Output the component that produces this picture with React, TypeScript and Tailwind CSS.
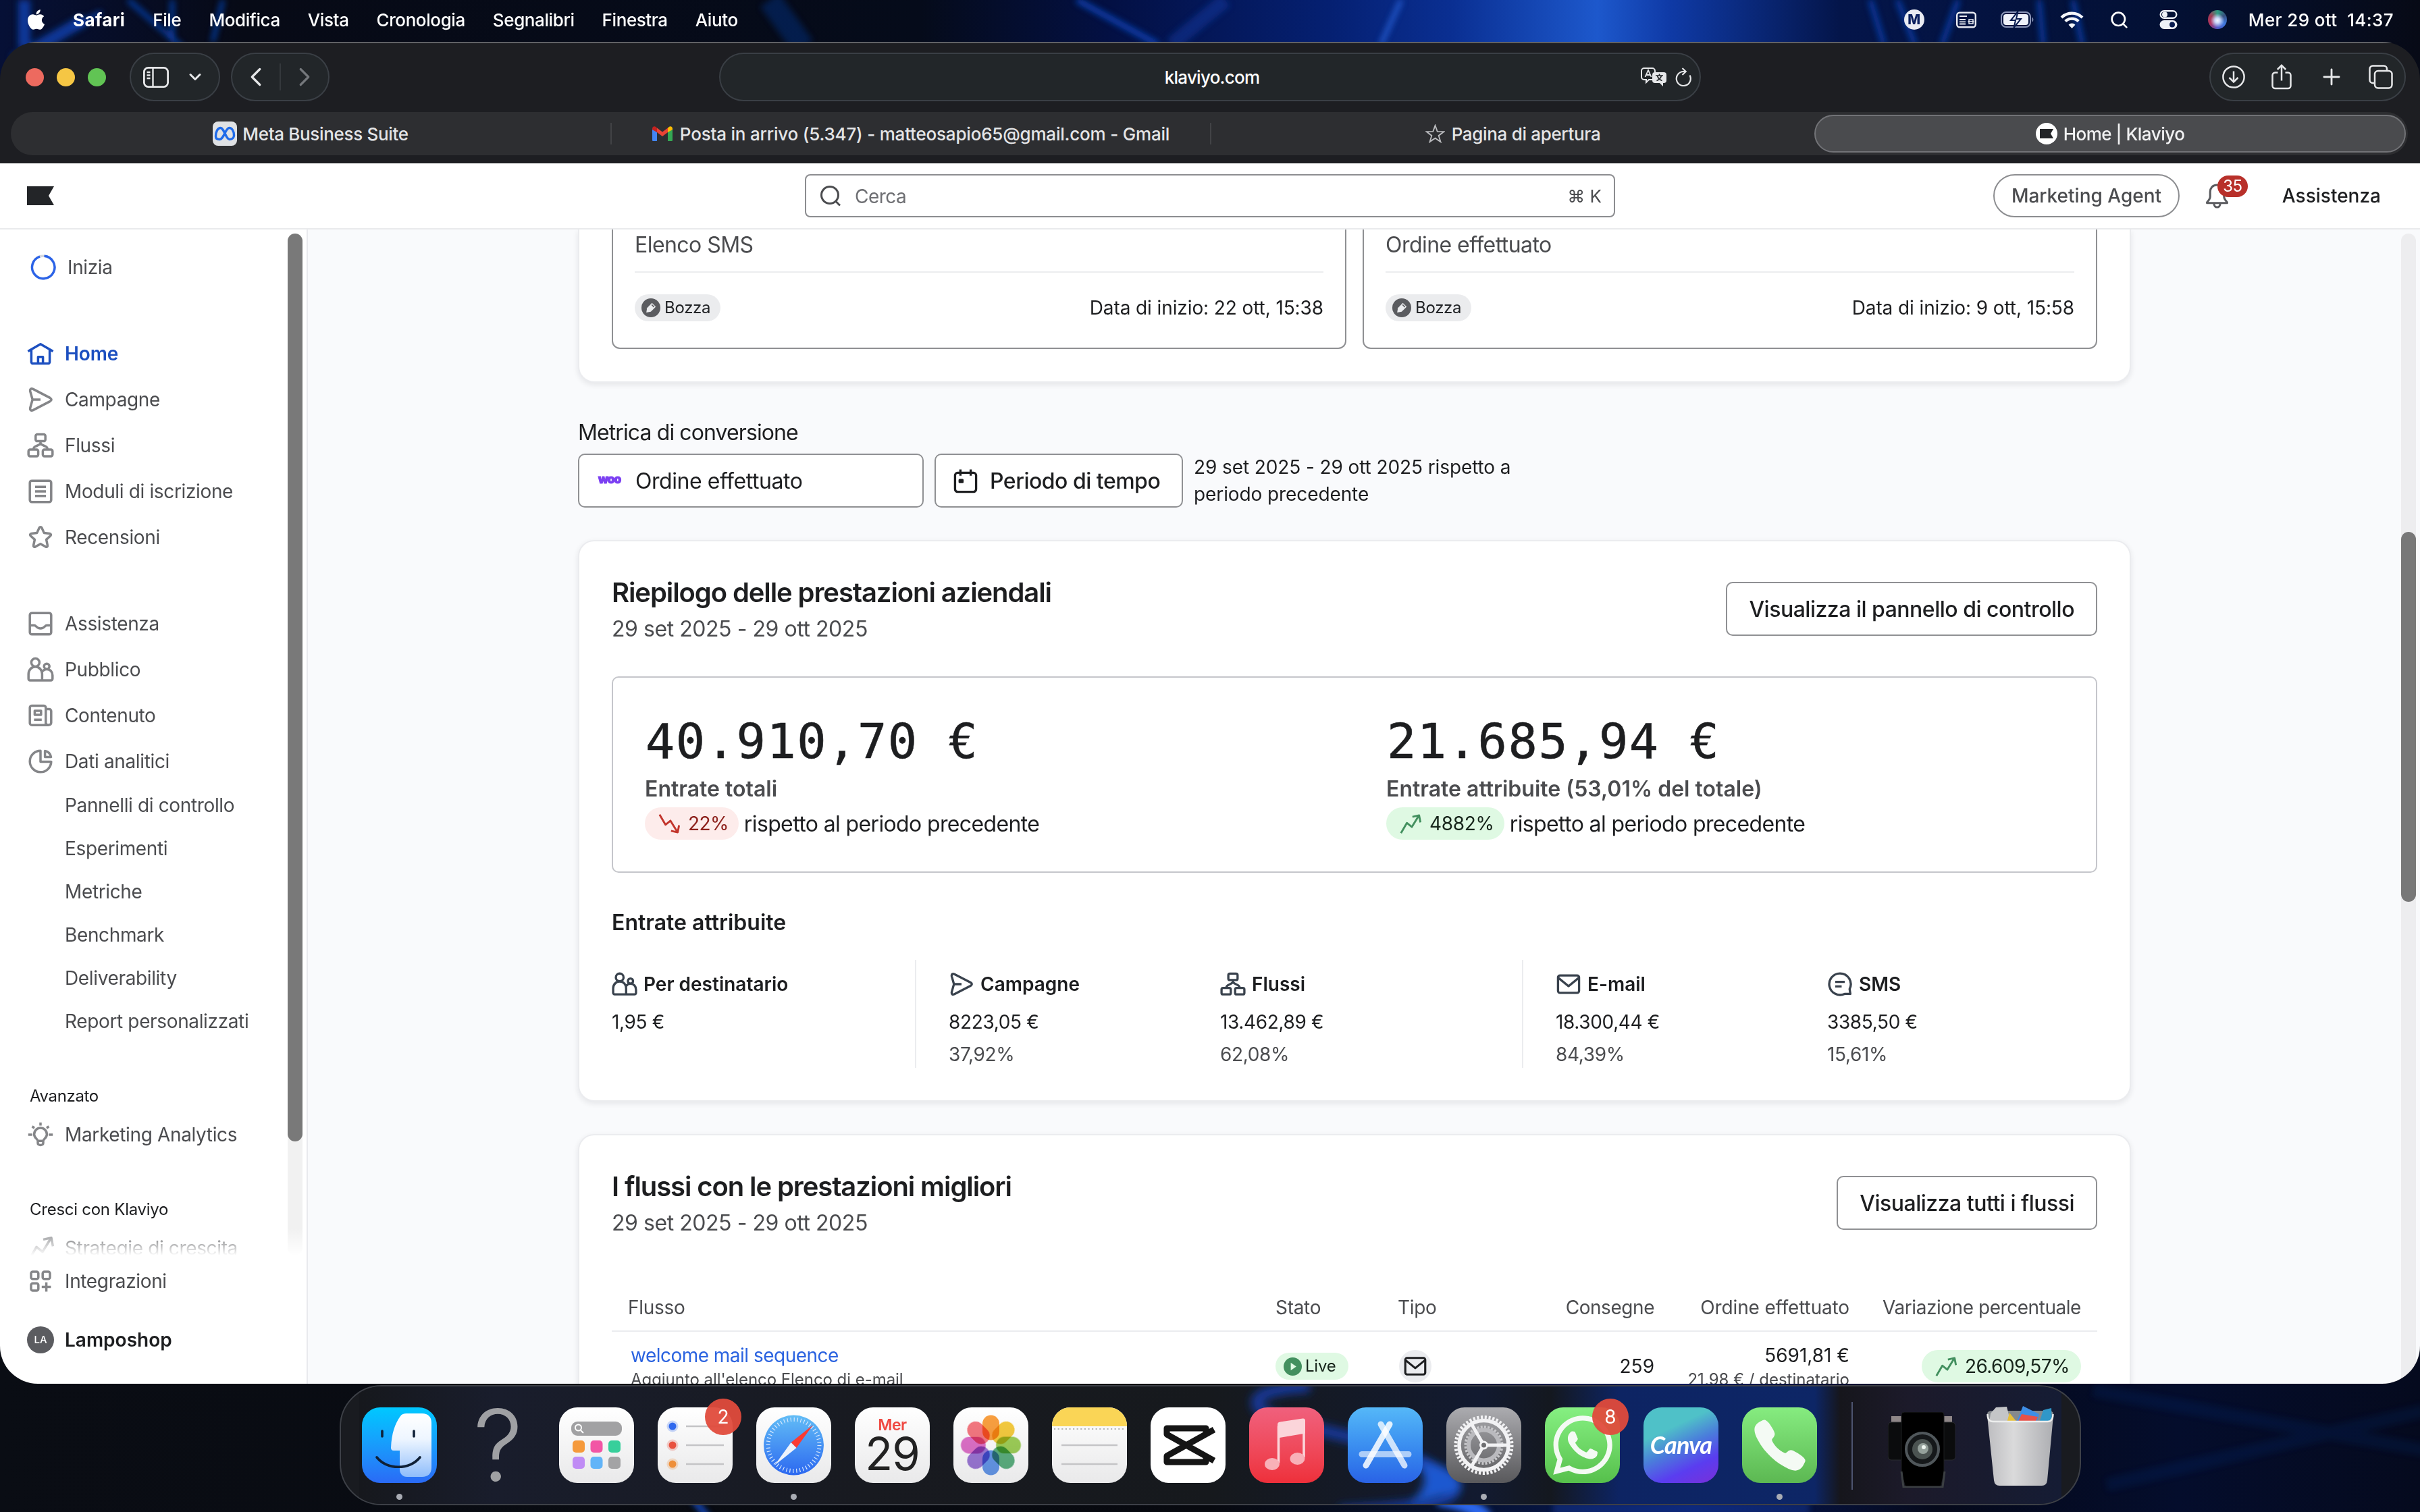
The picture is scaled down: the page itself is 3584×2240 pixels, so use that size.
import React from 'react';
import { ChevronDown, ChevronLeft, ChevronRight, Plus, Search } from 'lucide-react';
import { FaApple, FaWhatsapp } from 'react-icons/fa';
import { IoCall } from 'react-icons/io5';

type IconProps = { className?: string };

/* ---------- Klaviyo icons, 20px grid ---------- */

function Icon({ className = 'h-10 w-10', children }: { className?: string; children: React.ReactNode }) {
    return (
        <svg
            viewBox="0 0 20 20"
            fill="none"
            stroke="currentColor"
            strokeWidth="1.75"
            strokeLinejoin="round"
            className={`shrink-0 ${className}`}
        >
            {children}
        </svg>
    );
}

const HomeIcon = (p: IconProps) => (
    <Icon {...p}>
        <path d="M.7 8.2 10 2.9l9.3 5.3M3.2 7.2v8.9a1.2 1.2 0 0 0 1.2 1.2h11.2a1.2 1.2 0 0 0 1.2-1.2V7.2M8.2 17v-4.6h3.6V17" />
    </Icon>
);

const SendIcon = (p: IconProps) => (
    <Icon {...p}>
        <path d="M2.4 4C2 2.2 3 1.5 4.5 2.2L17 8.7c1.4.8 1.4 1.8 0 2.6L4.5 17.8C3 18.5 2 17.8 2.4 16l1.7-6zM4.1 10H10" />
    </Icon>
);

const FlowIcon = (p: IconProps) => (
    <Icon {...p}>
        <rect x="6.4" y="1.8" width="7.2" height="5" rx="1.2" />
        <rect x="1.1" y="13" width="7.2" height="5" rx="1.2" />
        <rect x="11.7" y="13" width="7.2" height="5" rx="1.2" />
        <path d="M4.8 13c0-3.4 3.6-2 5.2-4.6 1.6 2.6 5.2 1.2 5.2 4.6M10 6.8v1.8" />
    </Icon>
);

const FormIcon = (p: IconProps) => (
    <Icon {...p}>
        <rect x="2.1" y="2.1" width="15.8" height="15.8" rx="1.5" />
        <path d="M6 6.6h8M6 10h8M6 13.4h8" />
    </Icon>
);

const StarIcon = (p: IconProps) => (
    <Icon {...p}>
        <path d="M9.1 2.9a1 1 0 0 1 1.8 0l1.7 3.8 4.2.5c.9.1 1.2 1.1.6 1.7l-3.1 2.8.9 4.3c.2.9-.7 1.4-1.4 1L10 14.9 6.2 17c-.7.4-1.6-.1-1.4-1l.9-4.3-3.1-2.8c-.6-.6-.3-1.6.6-1.7l4.2-.5z" />
    </Icon>
);

const InboxIcon = (p: IconProps) => (
    <Icon {...p}>
        <rect x="2.1" y="2.1" width="15.8" height="15.8" rx="1.5" />
        <path d="M2.1 11.2h3.3c1.6 0 1.4 2.3 4.6 2.3s3-2.3 4.6-2.3h3.3" />
    </Icon>
);

const PeopleIcon = (p: IconProps) => (
    <Icon {...p}>
        <circle cx="6.2" cy="4.7" r="3" />
        <circle cx="14.6" cy="7.6" r="2" />
        <path d="M1.1 16.7v-3.4c0-3 2.2-5.4 5.1-5.4s5 2.4 5 5.4V18H2.3a1.2 1.2 0 0 1-1.2-1.3zM11.2 18h6.5a1.2 1.2 0 0 0 1.2-1.2v-2.5c0-2.6-1.8-4.6-4.2-4.6-1.6 0-3 .9-3.7 2.3" />
    </Icon>
);

const ContentIcon = (p: IconProps) => (
    <Icon {...p}>
        <path d="M16.2 17.1H3.6a1.5 1.5 0 0 1-1.5-1.5V4.2a1.5 1.5 0 0 1 1.5-1.5h8.8a1.5 1.5 0 0 1 1.5 1.5v12.9M13.9 5.3h2.5a1.5 1.5 0 0 1 1.5 1.5v8.6c0 2.2-4 2.2-4 0" />
        <path d="M5.7 6.5h4.7v3H5.7zM5.2 13.1h5.7" />
    </Icon>
);

const PieIcon = (p: IconProps) => (
    <Icon {...p}>
        <path d="M10 2.1a7.9 7.9 0 1 0 7.9 8.1H10z" />
        <path d="M13.3 2.3c2.4.4 4 2.1 4.5 4.5h-4.5z" />
    </Icon>
);

const BulbIcon = (p: IconProps) => (
    <Icon {...p}>
        <path d="M8 14.6c0-1.3-2.7-2.2-2.7-4.9a4.7 4.7 0 0 1 9.4 0c0 2.7-2.7 3.6-2.7 4.9zM8 14.6v1.6c0 2 4 2 4 0v-1.6M10 1v2.3M.9 10h3M16.1 10h3M3.8 3.9l1.7 1.2M16.2 3.9l-1.7 1.2" />
    </Icon>
);

const TrendUp = (p: IconProps) => (
    <Icon {...p}>
        <path d="M1.7 18.3 7 9.2l4.5 3.6 6-9.8M12 3.7l6-1.3 1.2 6.3" />
    </Icon>
);

const TrendDown = (p: IconProps) => (
    <Icon {...p}>
        <path d="M1.7 1.7 7 10.8l4.5-3.6 6 9.8M12 16.3l6 1.3 1.2-6.3" />
    </Icon>
);

const AppsIcon = (p: IconProps) => (
    <Icon {...p}>
        <rect x="3" y="3" width="5.4" height="5.4" rx="1.3" />
        <rect x="11.6" y="3" width="5.4" height="5.4" rx="1.3" />
        <rect x="3" y="11.6" width="5.4" height="5.4" rx="1.3" />
        <path d="M14.3 10.9v6.8M10.9 14.3h6.8" />
    </Icon>
);

const MailIcon = (p: IconProps) => (
    <Icon {...p}>
        <rect x="1.8" y="3.2" width="16.4" height="13.6" rx="1.5" />
        <path d="m2.2 5.2 7.800 6.400 7.800-6.400" />
    </Icon>
);

const SmsIcon = (p: IconProps) => (
    <Icon {...p}>
        <path d="M10 1.600a8.400 8.400 0 1 0 3.600 16c1.600 0 3-.1 4.500 0l-.6-3.800A8.400 8.400 0 0 0 10 1.600zM6.300 8.200h7.400M6.300 11.800h5" />
    </Icon>
);

const CalendarIcon = (p: IconProps) => (
    <Icon {...p}>
        <rect x="1.8" y="3.4" width="16.4" height="14.8" rx="2" />
        <path d="M6 .8v4.8M14 .8v4.8M5.4 9h2.2v1.6H5.4z" />
    </Icon>
);

const DraftIcon = ({ className }: IconProps) => (
    <svg viewBox="0 0 28 28" className={className}>
        <circle cx="14" cy="14" r="14" fill="#5b5c60" />
        <path d="m15.6 6.8 5.6 5.6-7.3 7.4-6.7 1.1 1.1-6.7z" fill="#ecedef" />
        <path d="m15.2 9.4 3.5 3.5" stroke="#5b5c60" strokeWidth="1.6" />
    </svg>
);

const Flag = ({ className }: IconProps) => (
    <svg viewBox="0 0 40 28" className={className} preserveAspectRatio="none">
        <path d="M0 0h40l-8 14 8 14H0z" fill="#232528" />
    </svg>
);

/* ---------- desktop ---------- */

function Wallpaper() {
    return (
        <svg viewBox="0 0 3584 2240" className="absolute inset-0 h-full w-full">
            <defs>
                <linearGradient id="wpTop" x1="0" x2="1">
                    <stop offset="0" stopColor="#061036" />
                    <stop offset=".1" stopColor="#070a16" />
                    <stop offset=".38" stopColor="#050b1a" />
                    <stop offset=".46" stopColor="#031044" />
                    <stop offset=".55" stopColor="#052072" />
                    <stop offset=".6" stopColor="#0a2f92" />
                    <stop offset=".66" stopColor="#1d58cc" />
                    <stop offset=".69" stopColor="#0f3aa6" />
                    <stop offset=".76" stopColor="#04154a" />
                    <stop offset=".9" stopColor="#031033" />
                    <stop offset="1" stopColor="#070a16" />
                </linearGradient>
                <linearGradient id="wpBottom" x1="0" x2="1">
                    <stop offset="0" stopColor="#0a0d14" />
                    <stop offset=".5" stopColor="#07090f" />
                    <stop offset=".6" stopColor="#06112e" />
                    <stop offset=".7" stopColor="#06195a" />
                    <stop offset=".8" stopColor="#05091a" />
                    <stop offset=".9" stopColor="#040d2c" />
                    <stop offset="1" stopColor="#050a1e" />
                </linearGradient>
                <filter id="wpBlur" x="-20%" y="-20%" width="140%" height="140%">
                    <feGaussianBlur stdDeviation="5" />
                </filter>
            </defs>
            <rect width="3584" height="1200" fill="url(#wpTop)" />
            <rect y="1200" width="3584" height="1040" fill="url(#wpBottom)" />
            <g fill="none" stroke="#1049c4" filter="url(#wpBlur)">
                <path d="M36 0v70M124 30 20 90" strokeWidth="18" opacity=".7" />
                <path d="m190 0 80 70M255 0v62M330 0l-15 62M110 40l40-22" strokeWidth="5" />
                <path d="m1140 0 50 70" strokeWidth="34" opacity=".3" />
                <path d="m1595 0 120 66" strokeWidth="8" opacity=".9" />
                <path d="m1815 0-80 66" strokeWidth="22" opacity=".35" />
                <path d="m2075 0-30 66" strokeWidth="5" stroke="#2c6be6" />
                <path d="m2770 0 20 66M2810 0l26 66M2900 0l-24 66M3020 0l6 66M3070 0l14 66" strokeWidth="7" opacity=".8" />
            </g>
            <g fill="none" stroke="#1450d0" filter="url(#wpBlur)">
                <path d="m1010 2200 40 50" strokeWidth="8" />
                <path d="M2130 2220q60 10 70 30" strokeWidth="22" stroke="#2a66ec" />
                <path d="M2300 2235h380" strokeWidth="20" opacity=".3" />
                <path d="m3100 2060 500 90M3120 2200l470-110" strokeWidth="20" opacity=".1" />
            </g>
        </svg>
    );
}

function MenuBar() {
    return (
        <div className="relative flex h-[58px] items-center pr-[39px] pl-[39px] text-[26px] font-medium tracking-[-0.4px] whitespace-pre text-white">
            <FaApple className="h-[34px] w-[29px]" />
            <span className="ml-[40px] font-bold tracking-[0.4px]">Safari</span>
            <div className="ml-[41px] flex gap-[41px]">
                <span>File</span>
                <span>Modifica</span>
                <span>Vista</span>
                <span>Cronologia</span>
                <span>Segnalibri</span>
                <span>Finestra</span>
                <span>Aiuto</span>
            </div>
            <div className="ml-auto flex items-center">
                <span className="flex h-[30px] w-[30px] items-center justify-center rounded-full bg-[#e9ebf2] text-[20px] font-extrabold tracking-normal text-[#0a1f5e]">
                    M
                </span>
                <svg viewBox="0 0 30 24" className="ml-[47px] h-[25px] w-[30px]" fill="none" stroke="#e9ebf2" strokeWidth="2.4">
                    <rect x="1.2" y="1.2" width="27.6" height="21.6" rx="4" />
                    <path d="M5 6.500h11M5 11.500h9M5 14.800h9M5 18h9" strokeWidth="1.8" />
                    <path d="M19 11.500h6v6h-6zM17.500 14.500h9" strokeWidth="1.5" />
                </svg>
                <svg viewBox="0 0 50 24" className="ml-[36px] h-6 w-[50px]">
                    <rect x="1" y="1" width="43" height="22" rx="7" fill="none" stroke="#8b95b8" strokeWidth="2" />
                    <rect x="4" y="4" width="37" height="16" rx="4" fill="#eef1fa" />
                    <path d="M46.5 8.500c2.500 1 2.500 6 0 7z" fill="#8b95b8" />
                    <path d="M25.500 0 15 13h7l-2.500 11L30 11h-7z" fill="#eef1fa" stroke="#0a1c50" strokeWidth="2" />
                </svg>
                <svg viewBox="0 0 34 25" className="ml-[38px] h-[25px] w-[35px]" fill="none" stroke="#f4f6fb" strokeWidth="4.2">
                    <path d="M1.500 9a22 22 0 0 1 31 0M7.200 14.600a14 14 0 0 1 19.600 0" />
                    <path d="m17 25-5-5.300a7 7 0 0 1 10 0z" fill="#f4f6fb" stroke="none" />
                </svg>
                <Search className="ml-[38px] h-[29px] w-[29px]" strokeWidth={2.2} />
                <svg viewBox="0 0 26 28" className="ml-[45px] h-[28px] w-[27px]">
                    <rect x="1.2" y="1.2" width="23.6" height="10.6" rx="5.3" fill="none" stroke="#eef0f6" strokeWidth="2.4" />
                    <circle cx="7.5" cy="6.5" r="4" fill="#eef0f6" />
                    <rect y="15" width="26" height="13" rx="6.5" fill="#eef0f6" />
                    <circle cx="18.5" cy="21.5" r="4" fill="#0a1c50" />
                </svg>
                <span className="ml-[45px] h-7 w-7 rounded-full bg-[radial-gradient(circle_at_50%_55%,#f4f6ff_0%,#c9d6f8_18%,transparent_50%),conic-gradient(#2f9f84,#37507f,#3f7ae0,#4f58c8,#b2355f,#a03a55,#2f9f84)]" />
                <span className="ml-[32px] tracking-[0.38px]">Mer 29 ott  14:37</span>
            </div>
        </div>
    );
}

function Toolbar() {
    return (
        <div className="flex h-[104px] shrink-0 items-center border-t-2 border-[#606165] pb-0.5 pl-[38px] text-[#e6e7e9]">
            <div className="flex gap-[19px]">
                <span className="h-[27px] w-[27px] rounded-full bg-[#ed6a5f]" />
                <span className="h-[27px] w-[27px] rounded-full bg-[#f5c644]" />
                <span className="h-[27px] w-[27px] rounded-full bg-[#61c454]" />
            </div>
            <div className="ml-[35px] flex h-[72px] w-[134px] items-center rounded-full border-2 border-[#3a3f45] bg-[#222629] pl-[18px]">
                <svg viewBox="0 0 38 31" className="h-[31px] w-[38px]" fill="none" stroke="currentColor" strokeWidth="2.8">
                    <rect x="1.4" y="1.4" width="35.2" height="28.2" rx="6" />
                    <path d="M14.5 1.400v28.200M5.500 8h5M5.500 12.500h5M5.500 17h5" strokeWidth="2.4" />
                </svg>
                <ChevronDown className="ml-[25px] h-7 w-7" strokeWidth={2.6} />
            </div>
            <div className="ml-4 flex h-[72px] w-[146px] items-center rounded-full border-2 border-[#3a3f45] bg-[#222629] pl-[12px]">
                <ChevronLeft className="h-[46px] w-[46px]" strokeWidth={1.7} />
                <span className="ml-[12px] h-10 w-0.5 bg-[#34383c]" />
                <ChevronRight className="ml-[12px] h-[46px] w-[46px] text-[#75787c]" strokeWidth={1.7} />
            </div>
            <div className="ml-[577px] flex h-[72px] w-[1454px] items-center rounded-full border-2 border-[#3a3f45] bg-[#222629] pr-3">
                <span className="flex-1" />
                <span className="ml-[18px] text-[26px] font-medium tracking-[-0.75px] text-white">klaviyo.com</span>
                <span className="flex flex-1 items-center justify-end gap-[13px]">
                    <svg viewBox="0 0 38 28" className="h-[28px] w-[38px]">
                        <path
                            d="M17 18h-5l-4 4v-4H5a4 4 0 0 1-4-4V5a4 4 0 0 1 4-4h12a4 4 0 0 1 4 4v2"
                            fill="none"
                            stroke="currentColor"
                            strokeWidth="2"
                        />
                        <path d="m6.500 14 4.500-10 4.500 10M8.200 11h5.600" fill="none" stroke="currentColor" strokeWidth="1.8" />
                        <path d="M21 7h13a4 4 0 0 1 4 4v8a4 4 0 0 1-4 4h-1v5l-5-5h-7a4 4 0 0 1-4-4v-8a4 4 0 0 1 4-4z" fill="currentColor" />
                        <path d="M22 12h11M27.500 9.500V12M24.500 12c1 4 4 6.500 7 7.500M30.500 12c-1 4-4 6.500-7 7.500" fill="none" stroke="#222629" strokeWidth="1.7" />
                    </svg>
                    <svg viewBox="0 0 24 28" className="h-[28px] w-[24px]" fill="none" stroke="currentColor" strokeWidth="2.2">
                        <path d="M21.500 11.500A10.500 10.500 0 1 1 12 6h3M10.500 1l5.200 5-5.200 5" />
                    </svg>
                </span>
            </div>
            <div className="ml-[753px] flex h-[72px] w-[291px] items-center rounded-full border-2 border-[#3a3f45] bg-[#222629] pl-[17px]">
                <svg viewBox="0 0 34 34" className="h-[34px] w-[34px]" fill="none" stroke="currentColor" strokeWidth="2.5">
                    <circle cx="17" cy="17" r="15.6" />
                    <path d="M17 8.500v16M10.500 18l6.500 6.500 6.500-6.500" />
                </svg>
                <svg viewBox="0 0 30 38" className="ml-[39px] h-[38px] w-[30px]" fill="none" stroke="currentColor" strokeWidth="2.5">
                    <path d="M9.500 12.500h-4a4 4 0 0 0-4 4V32a4 4 0 0 0 4 4h19a4 4 0 0 0 4-4V16.500a4 4 0 0 0-4-4h-4M15 24.500V2M8.800 8 15 1.800 21.200 8" />
                </svg>
                <Plus className="ml-[40px] h-[38px] w-[38px]" strokeWidth={1.8} />
                <svg viewBox="0 0 36 36" className="ml-[36px] h-[36px] w-[36px]" fill="none" stroke="currentColor" strokeWidth="2.5">
                    <rect x="9" y="9" width="25.5" height="25.5" rx="5" />
                    <path d="M9 27H6a4.500 4.500 0 0 1-4.500-4.500V6A4.500 4.500 0 0 1 6 1.500h16.500A4.500 4.500 0 0 1 27 6v3" />
                </svg>
            </div>
        </div>
    );
}

function TabBar() {
    return (
        <div className="mr-[18px] mb-3 ml-4 flex h-16 shrink-0 items-center rounded-full bg-[#2d2e31] text-[26px] font-medium tracking-[-0.33px] text-[#e4e5e7]">
            <div className="flex w-[888px] items-center justify-center gap-[8px]">
                <span className="flex h-9 w-9 items-center justify-center rounded-[8px] bg-[#dfe1e4]">
                    <svg viewBox="0 0 32 22" className="h-[22px] w-8" fill="none" stroke="#1f6bea" strokeWidth="3.4">
                        <path d="M2.500 15C2.500 8 5.500 2.500 9.500 2.500c5.500 0 8 17 13.500 17 4.500 0 6.500-3 6.500-6C29.500 7 26.500 2.500 22.500 2.500c-5.500 0-8 17-14.500 17-3.500 0-5.500-1.500-5.500-4.500z" />
                    </svg>
                </span>
                <span>Meta Business Suite</span>
            </div>
            <span className="h-8 w-0.5 bg-[#424346]" />
            <div className="flex w-[886px] items-center justify-center gap-[11px]">
                <svg viewBox="0 0 30 22" className="h-[22px] w-[30px]">
                    <path d="M0 3v17.500C0 21.500.6 22 1.500 22H7V9z" fill="#4285f4" />
                    <path d="M30 3v17.500c0 1-.6 1.500-1.500 1.500H23V9z" fill="#34a853" />
                    <path d="M23 9V2.500l1.500-1.300C27-.8 30 .7 30 3.500V5z" fill="#fbbc04" />
                    <path d="M7 9V2.500L5.500 1.200C3-.8 0 .7 0 3.500V5z" fill="#c5221f" />
                    <path d="m7 2.500 8 6 8-6V9l-8 6-8-6z" fill="#ea4335" />
                </svg>
                <span className="tracking-[-0.2px]">Posta in arrivo (5.347) - matteosapio65@gmail.com - Gmail</span>
            </div>
            <span className="h-8 w-0.5 bg-[#424346]" />
            <div className="flex w-[893px] items-center justify-center gap-[10px]">
                <svg viewBox="0 0 28 27" className="h-[28px] w-[29px]" fill="none" stroke="#b9babd" strokeWidth="1.8">
                    <path d="m14 1.800 3.100 8.700 9.300.2-7.400 5.600 2.700 8.900-7.700-5.300-7.700 5.300L9 16.300 1.600 10.700l9.300-.2z" />
                </svg>
                <span>Pagina di apertura</span>
            </div>
            <div className="mr-[3px] flex h-14 flex-1 items-center justify-center gap-[9px] rounded-full border-2 border-[#727377] bg-[#4a4b4e] text-[#f1f1f2]">
                <span className="flex h-8 w-8 items-center justify-center rounded-full bg-white">
                    <Flag className="h-[14px] w-5" />
                </span>
                <span className="tracking-[-0.5px]">Home | Klaviyo</span>
            </div>
        </div>
    );
}

/* ---------- Klaviyo app ---------- */

function Header() {
    return (
        <header className="flex h-[98px] shrink-0 items-center border-b-2 border-[#e9eaec] bg-white pr-[58px] pl-10 text-[28px]">
            <Flag className="h-7 w-10" />
            <div className="ml-[1112px] flex h-16 w-[1200px] items-center rounded-[8px] border-2 border-[#8c8d90] pr-[18px] pl-5">
                <svg viewBox="0 0 32 32" className="h-8 w-8" fill="none" stroke="#4b4c4f" strokeWidth="3">
                    <circle cx="15" cy="15" r="12.5" />
                    <path d="m23.500 24 6.500 6.500" />
                </svg>
                <span className="ml-5 pt-0.5 tracking-[-0.5px] text-[#6e6f73]">Cerca</span>
                <span className="ml-auto text-[26px] text-[#4b4c4f]">⌘ K</span>
            </div>
            <button className="ml-[560px] h-16 w-[276px] rounded-full border-2 border-[#8c8d90] font-medium text-[#4b4c4f]">
                Marketing Agent
            </button>
            <div className="relative ml-[38px]">
                <svg viewBox="0 0 34 36" className="h-[37px] w-[35px]" fill="none" stroke="#5b5c60" strokeWidth="3" strokeLinejoin="round">
                    <path d="M17 2C10 2 7 7 7 12v7c0 2.500-1 4-4.500 8v1h29v-1c-3.500-4-4.500-5.500-4.500-8v-7c0-5-3-10-10-10zM12.500 28.500c0 7.500 9 7.500 9 0" />
                </svg>
                <span className="absolute -top-[12px] left-[18px] flex h-8 w-[45px] items-center justify-center rounded-full bg-[#b8302a] text-[24px] tracking-[-0.5px] text-white">
                    35
                </span>
            </div>
            <span className="ml-auto font-medium text-[#1d1e20]">Assistenza</span>
        </header>
    );
}

const mainNav = [
    { label: 'Campagne', icon: SendIcon },
    { label: 'Flussi', icon: FlowIcon },
    { label: 'Moduli di iscrizione', icon: FormIcon },
    { label: 'Recensioni', icon: StarIcon },
];

const secondNav = [
    { label: 'Assistenza', icon: InboxIcon },
    { label: 'Pubblico', icon: PeopleIcon },
    { label: 'Contenuto', icon: ContentIcon },
    { label: 'Dati analitici', icon: PieIcon },
];

const analytics = ['Pannelli di controllo', 'Esperimenti', 'Metriche', 'Benchmark', 'Deliverability', 'Report personalizzati'];

function NavItem({ label, icon: I }: { label: string; icon: React.ComponentType<IconProps> }) {
    return (
        <div className="flex h-[68px] items-center gap-4 pl-10">
            <I className="h-10 w-10 text-[#858689]" />
            {label}
        </div>
    );
}

function Sidebar() {
    return (
        <aside className="flex w-[456px] shrink-0 flex-col border-r-2 border-[#e9eaee] bg-white text-[28px] tracking-[-0.36px] text-[#4b4c4f]">
            <div className="relative flex h-[1520px] overflow-hidden">
                <nav className="flex-1 pt-[22px]">
                    <div className="mb-[60px] flex h-[68px] items-center gap-[17px] pl-[45px]">
                        <svg viewBox="0 0 38 38" className="h-[38px] w-[38px]" fill="none" stroke="#2b63e8" strokeWidth="3.4">
                            <circle cx="19" cy="19" r="16.7" stroke="#d5d8df" />
                            <path d="M20.500 2.300A16.700 16.700 0 1 1 14 3.100" />
                        </svg>
                        Inizia
                    </div>
                    <div className="flex h-[68px] items-center gap-4 pl-10 font-semibold tracking-[-0.1px] text-[#1c4fc0]">
                        <HomeIcon className="h-10 w-10" />
                        Home
                    </div>
                    {mainNav.map((item) => (
                        <NavItem key={item.label} {...item} />
                    ))}
                    <div className="mt-[60px]">
                        {secondNav.map((item) => (
                            <NavItem key={item.label} {...item} />
                        ))}
                    </div>
                    <div className="-mt-px">
                        {analytics.map((label) => (
                            <div key={label} className="flex h-16 items-center pl-24 whitespace-nowrap">
                                {label}
                            </div>
                        ))}
                    </div>
                    <div className="mt-[56px] flex h-[46px] items-center pl-11 text-[24px] text-[#1d1e20]">Avanzato</div>
                    <NavItem label="Marketing Analytics" icon={BulbIcon} />
                    <div className="mt-[54px] flex h-[46px] items-center pl-11 text-[24px] tracking-[-0.26px] text-[#1d1e20]">Cresci con Klaviyo</div>
                    <NavItem label="Strategie di crescita" icon={TrendUp} />
                </nav>
                <div className="mt-1.5 mr-1.5 w-[22px] rounded-full bg-[#f1f1f1]">
                    <div className="h-[1345px] rounded-full bg-[#797979]" />
                </div>
                <div className="absolute inset-x-0 bottom-0 h-10 bg-linear-to-b from-white/0 to-white" />
            </div>
            <div className="mt-1">
                <NavItem label="Integrazioni" icon={AppsIcon} />
            </div>
            <div className="mt-[19px] flex h-[68px] items-center gap-4 pl-10 font-semibold tracking-normal text-[#1d1e20]">
                <span className="flex h-10 w-10 items-center justify-center rounded-full bg-[#5b5c60] text-[15px] font-medium text-white">LA</span>
                Lamposhop
            </div>
        </aside>
    );
}

function DraftCard({ name, date }: { name: string; date: string }) {
    return (
        <div className="h-[177px] flex-1 rounded-b-[12px] border-2 border-t-0 border-[#8f9093] px-8">
            <div className="flex h-[45px] items-center text-[32px] tracking-[-0.55px] text-[#4b4c4f]">{name}</div>
            <div className="mt-[17px] flex items-center justify-between border-t-2 border-[#ecedef] pt-[31px]">
                <span className="flex h-10 items-center gap-1.5 rounded-full bg-[#ebecee] px-[10px] pr-[15px] text-[24px] tracking-[-0.3px] text-[#232528]">
                    <DraftIcon className="h-7 w-7" />
                    Bozza
                </span>
                <span className="text-[28px] tracking-[-0.1px] text-[#1d1e20]">{date}</span>
            </div>
        </div>
    );
}

function CardHeader({ title, button }: { title: string; button: string }) {
    return (
        <div className="flex items-start justify-between">
            <div>
                <h2 className="flex h-14 items-center text-[40px] font-semibold tracking-[-1.1px] whitespace-nowrap">{title}</h2>
                <p className="flex h-[51px] items-center text-[32px] tracking-[-0.45px] text-[#4b4c4f]">29 set 2025 - 29 ott 2025</p>
            </div>
            <button className="mt-3 h-20 rounded-[10px] border-2 border-[#8f9093] px-8 pt-0.5 text-[32px] font-medium tracking-[-0.5px]">{button}</button>
        </div>
    );
}

function Total({ value, label, delta, up }: { value: string; label: string; delta: string; up?: boolean }) {
    return (
        <div className="pl-[47px]">
            <div className="ml-px h-20 font-['DejaVu_Sans_Mono',monospace] text-[72px] leading-[80px] tracking-[1.5px] whitespace-nowrap [-webkit-text-stroke:0.6px]">
                {value}
            </div>
            <div className="mt-1.5 flex h-[50px] items-center text-[32px] font-semibold text-[#4b4c4f]">{label}</div>
            <div className="mt-0.5 flex h-12 items-center gap-2 text-[32px] tracking-[-0.63px]">
                {up ? (
                    <span className="flex h-12 items-center gap-3 rounded-full bg-[#dff9e3] pr-[15px] pl-[19px] text-[28px] tracking-[-0.3px] text-[#16241a]">
                        <TrendUp className="h-[33px] w-[33px] text-[#43905f]" />
                        {delta}
                    </span>
                ) : (
                    <span className="flex h-12 items-center gap-3 rounded-full bg-[#fdeceb] pr-[15px] pl-[19px] text-[28px] tracking-[-0.6px] text-[#8d211c]">
                        <TrendDown className="h-[33px] w-[33px] text-[#c2352c]" />
                        {delta}
                    </span>
                )}
                <span className="pt-0.5">rispetto al periodo precedente</span>
            </div>
        </div>
    );
}

type SourceProps = { icon: React.ComponentType<IconProps>; label: string; value: string; share?: string; className: string };

function Source({ icon: I, label, value, share, className }: SourceProps) {
    return (
        <div className={`pt-3 text-[28px] tracking-[-0.36px] ${className}`}>
            <div className="flex h-12 items-center gap-[9px] font-semibold tracking-normal">
                <I className="h-[38px] w-[38px] text-[#39424d]" />
                {label}
            </div>
            <div className="mt-2 flex h-12 items-center">{value}</div>
            {share && <div className="flex h-12 items-center text-[#4b4c4f]">{share}</div>}
        </div>
    );
}

function Content() {
    return (
        <div className="ml-[400px] w-[2300px] text-[#1d1e20]">
            <section className="flex h-[227px] gap-6 rounded-b-[24px] border-2 border-t-0 border-[#ebecef] bg-white px-12 shadow-[0_3px_8px_rgba(20,25,35,0.09)]">
                <DraftCard name="Elenco SMS" date="Data di inizio: 22 ott, 15:38" />
                <DraftCard name="Ordine effettuato" date="Data di inizio: 9 ott, 15:58" />
            </section>

            <div className="mt-[54px] flex h-10 items-center text-[32px] tracking-[-0.9px]">Metrica di conversione</div>
            <div className="mt-[11px] flex h-20 gap-4">
                <div className="flex w-[512px] items-center rounded-[10px] border-2 border-[#8f9093] bg-white pt-0.5 pl-7 text-[32px] tracking-[-0.45px]">
                    <span className="w-[55px] pb-1 text-[17px] font-black tracking-[-0.9px] text-[#7b3ff2] [-webkit-text-stroke:1px]">woo</span>
                    Ordine effettuato
                </div>
                <div className="flex w-[368px] items-center rounded-[10px] border-2 border-[#8f9093] bg-white pt-0.5 pl-[25px] text-[32px] font-medium tracking-[-0.5px]">
                    <CalendarIcon className="mr-[17px] h-[38px] w-[38px]" />
                    Periodo di tempo
                </div>
                <p className="w-[480px] text-[28px] leading-10 tracking-[-0.1px]">29 set 2025 - 29 ott 2025 rispetto a periodo precedente</p>
            </div>

            <section className="mt-12 h-[832px] rounded-[24px] border-2 border-[#ebecef] bg-white px-12 pt-12 shadow-[0_3px_8px_rgba(20,25,35,0.09)]">
                <div className="h-[152px]">
                    <CardHeader title="Riepilogo delle prestazioni aziendali" button="Visualizza il pannello di controllo" />
                </div>
                <div className="grid h-[291px] grid-cols-2 rounded-[10px] border-2 border-[#c5c6cb] pt-[54px]">
                    <Total value="40.910,70 €" label="Entrate totali" delta="22%" />
                    <Total value="21.685,94 €" label="Entrate attribuite (53,01% del totale)" delta="4882%" up />
                </div>
                <h3 className="mt-[50px] flex h-12 items-center text-[32px] font-semibold">Entrate attribuite</h3>
                <div className="mt-[31px] flex h-40">
                    <Source icon={PeopleIcon} label="Per destinatario" value="1,95 €" className="w-[449px]" />
                    <div className="flex h-40 w-[899px] border-l-2 border-[#ebecef] pl-12">
                        <Source icon={SendIcon} label="Campagne" value="8223,05 €" share="37,92%" className="w-[402px]" />
                        <Source icon={FlowIcon} label="Flussi" value="13.462,89 €" share="62,08%" className="w-[401px]" />
                    </div>
                    <div className="flex h-40 flex-1 border-l-2 border-[#ebecef] pl-12">
                        <Source icon={MailIcon} label="E-mail" value="18.300,44 €" share="84,39%" className="w-[402px]" />
                        <Source icon={SmsIcon} label="SMS" value="3385,50 €" share="15,61%" className="w-[380px]" />
                    </div>
                </div>
            </section>

            <section className="mt-12 h-[600px] rounded-[24px] border-2 border-[#ebecef] bg-white px-12 pt-12 shadow-[0_3px_8px_rgba(20,25,35,0.09)]">
                <div className="h-[173px]">
                    <CardHeader title="I flussi con le prestazioni migliori" button="Visualizza tutti i flussi" />
                </div>
                <div className="grid h-[70px] grid-cols-[983px_181px_180px_200px_289px_343px] items-center border-b-2 border-[#ebecef] text-[28px] tracking-[-0.3px] text-[#4b4c4f]">
                    <span className="pl-6">Flusso</span>
                    <span>Stato</span>
                    <span>Tipo</span>
                    <span className="text-right tracking-[-0.45px]">Consegne</span>
                    <span className="text-right tracking-[-0.15px]">Ordine effettuato</span>
                    <span className="text-right tracking-[-0.45px]">Variazione percentuale</span>
                </div>
                <div className="grid h-[102px] grid-cols-[983px_181px_180px_200px_289px_343px] items-center text-[28px]">
                    <div className="pt-1 pl-7">
                        <div className="flex h-9 items-center tracking-[-0.52px] text-[#2b63e0]">welcome mail sequence</div>
                        <div className="flex h-9 items-center text-[24px] tracking-[-0.05px] text-[#4b4c4f]">Aggiunto all'elenco Elenco di e-mail</div>
                    </div>
                    <span className="flex h-10 w-[108px] items-center gap-[5px] rounded-full bg-[#dff9e3] pl-3 text-[24px] tracking-[-0.2px] text-[#16241a]">
                        <svg viewBox="0 0 28 28" className="h-[27px] w-[27px]">
                            <circle cx="14" cy="14" r="14" fill="#43905f" />
                            <path d="M11 8v12l8.500-6z" fill="#dff9e3" />
                        </svg>
                        Live
                    </span>
                    <span className="ml-[2px] flex h-12 w-12 items-center justify-center rounded-full bg-[#ebecef]">
                        <MailIcon className="h-9 w-9" />
                    </span>
                    <span className="text-right">259</span>
                    <div className="pt-1 text-right">
                        <div className="h-9 leading-9">5691,81 €</div>
                        <div className="h-9 text-[24px] leading-9 text-[#4b4c4f]">21,98 € / destinatario</div>
                    </div>
                    <div className="flex justify-end">
                        <span className="flex h-12 items-center gap-3 rounded-full bg-[#dff9e3] pr-[17px] pl-[19px] tracking-[-0.55px] text-[#16241a]">
                            <TrendUp className="h-[33px] w-[33px] text-[#43905f]" />
                            26.609,57%
                        </span>
                    </div>
                </div>
            </section>
        </div>
    );
}

/* ---------- dock ---------- */

type AppIconProps = { tile?: string; running?: boolean; badge?: string; children: React.ReactNode };

function AppIcon({ tile = 'bg-linear-to-b from-white to-[#e9e9ea]', running, badge, children }: AppIconProps) {
    return (
        <div className="relative h-28 w-[111px] shrink-0">
            <div className={`h-full w-full overflow-hidden rounded-[27px] ${tile}`}>{children}</div>
            {badge && (
                <span className="absolute -top-[13px] -right-[13px] flex h-[54px] w-[54px] items-center justify-center rounded-full bg-[#e04b3c]/95 text-[28px] text-white">
                    {badge}
                </span>
            )}
            {running && <span className="absolute top-32 left-[51px] h-[9px] w-[9px] rounded-full bg-[#a9acb4]" />}
        </div>
    );
}

const petals = ['#f98f1d', '#f4c21c', '#8cc63a', '#3fa36a', '#4a86e8', '#8a5fd0', '#d957c0', '#f4606a'];
const folder = ['#f59a3c', '#f256a5', '#37cf9b', '#c08cf5', '#62b4f8', '#a3a3a5'];

function Dock() {
    return (
        <div className="relative mt-0.5 ml-[503px] flex h-[178px] w-[2579px] overflow-hidden rounded-[62px] border-2 border-[#3d4047] bg-[#191b20] pt-[31px] pl-[31px]">
            <svg viewBox="0 0 2579 178" className="absolute inset-0 h-full w-full">
                <defs>
                    <linearGradient id="dockTint" x1="0" x2="1">
                        <stop offset="0" stopColor="#16181d" />
                        <stop offset=".08" stopColor="#191d2c" />
                        <stop offset=".3" stopColor="#181a20" />
                        <stop offset=".5" stopColor="#16191d" />
                        <stop offset=".66" stopColor="#121a30" />
                        <stop offset=".7" stopColor="#14181f" />
                        <stop offset=".74" stopColor="#0d2463" />
                        <stop offset=".855" stopColor="#0d2666" />
                        <stop offset=".87" stopColor="#16161c" />
                        <stop offset=".91" stopColor="#1c1a2a" />
                        <stop offset="1" stopColor="#151c34" />
                    </linearGradient>
                    <filter id="dockBlur" x="-20%" y="-20%" width="140%" height="140%">
                        <feGaussianBlur stdDeviation="7" />
                    </filter>
                </defs>
                <rect width="2579" height="178" fill="url(#dockTint)" />
                <path d="M1440 0c-110 5-100 40-10 60 130 30 180 40 225 95 10 20-60 30-170 35" fill="none" stroke="#13389a" strokeWidth="18" filter="url(#dockBlur)" />
                <path d="M1600 110c50 10 80 30 65 50l-75 20c30-25 30-50 10-70z" fill="#1f58d0" filter="url(#dockBlur)" />
            </svg>
            <div className="relative flex gap-[35px]">
                <AppIcon tile="bg-linear-to-b from-[#00c8ff] to-[#2a6af6]" running>
                    <svg viewBox="0 0 111 112">
                        <defs>
                            <linearGradient id="face" x1="0" x2="0" y1="0" y2="1">
                                <stop offset="0" stopColor="#fff" />
                                <stop offset=".4" stopColor="#eef6ff" />
                                <stop offset="1" stopColor="#8fbdfb" />
                            </linearGradient>
                        </defs>
                        <path d="M66 9h23c9 0 14 5 14 14v66c0 9-5 14-14 14H67c-7 0-11-5-11-11V64h-9c-3 0-4-2-4-4 1-22 6-36 14-47 2-3 5-4 9-4z" fill="url(#face)" />
                        <path d="M30 35v8M77 35v8M22 74c16 19 48 19 64 0" fill="none" stroke="#0f2036" strokeWidth="3.6" strokeLinecap="round" />
                    </svg>
                </AppIcon>
                <div className="flex h-28 w-[111px] items-center justify-center text-[146px] leading-none font-light text-[#9fa0a3]">?</div>
                <AppIcon>
                    <svg viewBox="0 0 111 112">
                        <rect x="18" y="21" width="75" height="21" rx="9" fill="#a1a1a3" />
                        <g fill="none" stroke="#fff" strokeWidth="2">
                            <circle cx="28.5" cy="30" r="4.5" />
                            <path d="m32 34 4 4" />
                        </g>
                        {folder.map((color, i) => (
                            <rect key={color} x={20 + (i % 3) * 26.5} y={49 + Math.floor(i / 3) * 24} width="18" height="18" rx="5" fill={color} />
                        ))}
                    </svg>
                </AppIcon>
                <AppIcon badge="2">
                    <svg viewBox="0 0 111 112">
                        {['#2f68ee', '#e8513f', '#ee8f3a'].map((color, i) => (
                            <g key={color}>
                                <circle cx="22" cy={28 + i * 28} r="8.5" fill={color} opacity=".25" />
                                <circle cx="22" cy={28 + i * 28} r="5.5" fill={color} />
                                <path d={`M42 ${28 + i * 28}h56`} stroke="#c4c4c6" strokeWidth="2.5" />
                            </g>
                        ))}
                    </svg>
                </AppIcon>
                <AppIcon running>
                    <svg viewBox="0 0 111 112">
                        <defs>
                            <linearGradient id="compass" x1="0" x2="0" y1="0" y2="1">
                                <stop offset="0" stopColor="#62bdf6" />
                                <stop offset="1" stopColor="#2c68f0" />
                            </linearGradient>
                        </defs>
                        <circle cx="55.5" cy="56" r="44.5" fill="url(#compass)" />
                        <circle cx="55.5" cy="56" r="38" fill="none" stroke="#d6e8fd" strokeWidth="6" strokeDasharray="1.2 3.77" />
                        <path d="M84 26 51.500 52l8 8z" fill="#fb3b33" />
                        <path d="m27 86 24.500-34 8 8z" fill="#eef3fb" />
                    </svg>
                </AppIcon>
                <AppIcon>
                    <div className="pt-[15px] text-center text-[23px] leading-[23px] font-semibold tracking-[-0.5px] text-[#ef4a43]">Mer</div>
                    <div className="text-center text-[67px] leading-[62px] tracking-[-1px] text-[#222]">29</div>
                </AppIcon>
                <AppIcon>
                    <svg viewBox="0 0 111 112">
                        {petals.map((color, i) => (
                            <rect
                                key={color}
                                x="43"
                                y="11.5"
                                width="25"
                                height="37"
                                rx="12.5"
                                fill={color}
                                opacity=".85"
                                transform={`rotate(${i * 45} 55.5 56)`}
                                className="mix-blend-multiply"
                            />
                        ))}
                    </svg>
                </AppIcon>
                <AppIcon>
                    <svg viewBox="0 0 111 112">
                        <path d="M0 0h111v28H0z" fill="#fad556" />
                        <path d="M3 32h106" stroke="#b5b5b6" strokeWidth="2.2" strokeDasharray="2.2 3.4" />
                        <path d="M14 56h83M14 84h83" stroke="#c4c4c6" strokeWidth="2.5" />
                    </svg>
                </AppIcon>
                <AppIcon tile="bg-white">
                    <svg viewBox="0 0 111 112" fill="none" stroke="#151515" strokeWidth="9">
                        <path d="M94 79 24 40v-9h58v10M94 33 24 72v9h58V71" strokeLinejoin="round" />
                    </svg>
                </AppIcon>
                <AppIcon tile="bg-linear-to-b from-[#f0607d] to-[#ee2f3a]">
                    <svg viewBox="0 0 111 112">
                        <path d="M42 26c0-3 1-4 4-4.500l33-5c3-.5 4 1 4 3v19l-41 7z" fill="#fbd5da" />
                        <path d="M43.500 28v54M81 24v50" stroke="#fbd5da" strokeWidth="3.6" />
                        <ellipse cx="34" cy="84" rx="11" ry="9" fill="#f8b0b8" />
                        <ellipse cx="71.5" cy="76" rx="11" ry="9" fill="#f8b0b8" />
                    </svg>
                </AppIcon>
                <AppIcon tile="bg-linear-to-b from-[#55b8f8] to-[#2a62e6]">
                    <svg viewBox="0 0 111 112" fill="none" stroke="#fff" strokeWidth="9" strokeLinecap="round">
                        <path d="M62 25 27 86" opacity=".85" />
                        <path d="m49 25 35 61" opacity=".75" />
                        <path d="M21 69.500h69" opacity=".6" />
                    </svg>
                </AppIcon>
                <AppIcon tile="bg-linear-to-b from-[#acacb0] to-[#59595c]" running>
                    <svg viewBox="0 0 111 112" fill="none">
                        <circle cx="55.5" cy="56" r="41.5" stroke="#f2f2f4" strokeWidth="5" strokeDasharray="3.2 2.58" />
                        <circle cx="55.5" cy="56" r="36.5" stroke="#f2f2f4" strokeWidth="5.5" />
                        <circle cx="55.5" cy="56" r="27" stroke="#c9c9cc" strokeWidth="4" strokeDasharray="3 2.3" />
                        <circle cx="55.5" cy="56" r="22.5" stroke="#bababe" strokeWidth="6" />
                        <path d="M55.500 56h36M55.500 56l-18-31M55.500 56l-18 31" stroke="#f2f2f4" strokeWidth="5" />
                        <circle cx="55.5" cy="56" r="5" fill="#6d6d70" stroke="#f2f2f4" strokeWidth="3" />
                    </svg>
                </AppIcon>
                <AppIcon tile="bg-linear-to-b from-[#86f082] to-[#56c04b] text-[#f4faf4]" badge="8">
                    <FaWhatsapp className="mt-[6px] ml-[6px] h-[100px] w-[100px]" />
                </AppIcon>
                <AppIcon tile="bg-[linear-gradient(155deg,#4fc1c8_30%,#4a7ddb_52%,#5a3df0_75%,#7a2fd8)]">
                    <div className="pt-[33px] text-center font-['Lato'] text-[36px] leading-[44px] font-bold tracking-[-0.8px] text-white italic">Canva</div>
                </AppIcon>
                <AppIcon tile="bg-linear-to-b from-[#86ec80] to-[#5cb852] text-[#f4faf4]" running>
                    <IoCall className="mt-[13px] ml-[13px] h-[86px] w-[86px]" />
                </AppIcon>
            </div>
            <div className="relative -mt-[8px] ml-[51px] h-[130px] w-0.5 bg-[#4d5470]" />
            <svg viewBox="0 0 100 112" className="relative mt-[7px] ml-[52px] h-28 w-[100px]">
                <path d="M5 6h90v16H5z" fill="#8f8788" />
                <rect y="15" width="100" height="56" rx="5" fill="#0b0c0d" stroke="#2b2d30" />
                <path d="M24 0h56q3 0 3 4v86l-4 18q-1 3-4 3H29q-3 0-4-3l-5-18V4q0-4 4-4z" fill="#000" stroke="#1d1f21" />
                <path d="m20 88 3 23h58l3-23" fill="none" stroke="#3b3f42" strokeWidth="3" />
                <circle cx="51" cy="55" r="24" fill="#15181a" stroke="#50575b" strokeWidth="4" />
                <circle cx="51" cy="55" r="15" fill="#4b5351" />
                <circle cx="52" cy="54" r="8" fill="#95a19b" />
                <circle cx="53" cy="52" r="3" fill="#eef5ef" />
            </svg>
            <svg viewBox="0 0 100 118" className="relative -mt-[2px] ml-[46px] h-[118px] w-[100px]">
                <defs>
                    <linearGradient id="bin" x1="0" x2="1">
                        <stop offset="0" stopColor="#bdbdc0" />
                        <stop offset=".4" stopColor="#dadadb" />
                        <stop offset="1" stopColor="#adaeb2" />
                    </linearGradient>
                </defs>
                <path d="M1 12q0-5 8-5h82q8 0 8 5l-2 14H3z" fill="#85898e" />
                <path d="m14 2 16-1 6 24H4l2-14z" fill="#c4c5c7" />
                <path d="m34 10 12 15H30z" fill="#e6bf3a" />
                <path d="m54 0 24 12-4 13H44z" fill="#3e8ee6" />
                <path d="m52 12 24 4-4 9H46z" fill="#e8524a" />
                <path d="m84 6 12-3 1 21-19 1z" fill="#2f97c9" />
                <path d="M1 14q1 9 8 9h82q7 0 8-9l-9 96q-1 8-8 8H19q-7 0-8-8z" fill="url(#bin)" />
                <path d="M1.500 12q0 11 8 11h81q8 0 8-11" fill="none" stroke="#eceded" strokeWidth="2.4" />
            </svg>
        </div>
    );
}

export default function App() {
    return (
        <div className="relative h-[2240px] w-[3584px] overflow-hidden bg-[#06080f] font-['Inter',sans-serif] antialiased">
            <Wallpaper />
            <MenuBar />
            <div className="relative mt-1 flex h-[1988px] flex-col overflow-hidden rounded-[56px] bg-[#1d1e22]">
                <Toolbar />
                <TabBar />
                <Header />
                <div className="flex min-h-0 flex-1 overflow-hidden bg-[#f9fafc]">
                    <Sidebar />
                    <main className="flex-1 overflow-hidden">
                        <Content />
                    </main>
                    <div className="mt-1.5 mr-1.5 w-[22px] rounded-t-full bg-[#ededef]">
                        <div className="mt-[442px] h-[548px] rounded-full bg-[#787878]" />
                    </div>
                </div>
            </div>
            <Dock />
        </div>
    );
}
